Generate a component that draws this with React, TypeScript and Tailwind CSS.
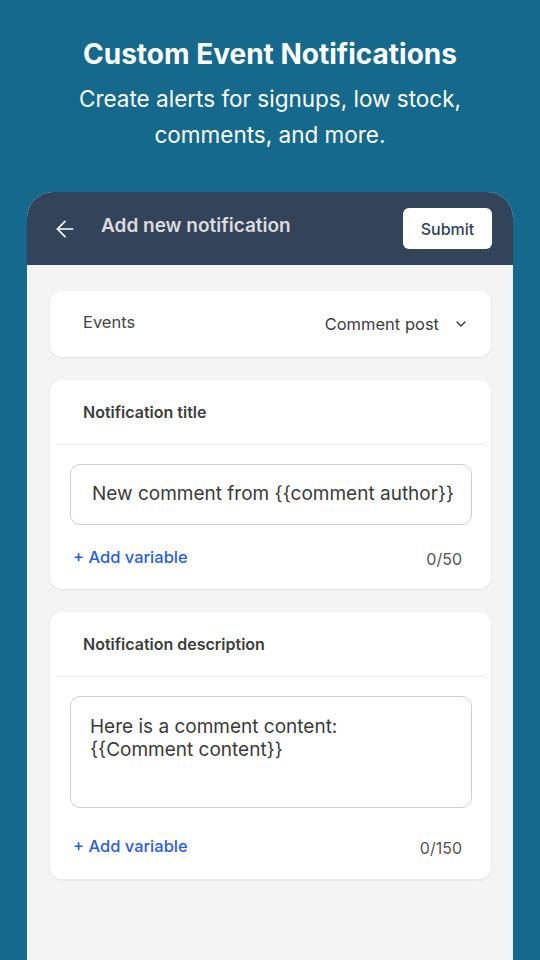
import React from "react";
import { ArrowLeft, ChevronDown } from "lucide-react";

const FieldCard = ({
  label,
  children,
  count,
  footer,
}: {
  label: string;
  children: React.ReactNode;
  count: string;
  footer: string;
}) => (
  <div className="bg-white rounded-xl shadow-[0_1px_3px_rgba(0,0,0,0.08)]">
    <div className="h-[64px] flex items-center px-[33px] text-[16px] font-semibold text-[#3d3d3d]">
      {label}
    </div>
    <div className="mx-[6px] h-px bg-[#ececec]" />
    <div className="pl-[20px] pr-[19px] pt-[19px]">{children}</div>
    <div className={`flex items-center justify-between pl-[23px] pr-[29px] ${footer}`}>
      <span className="text-[16.5px] font-medium text-[#2b5ee8]">+ Add variable</span>
      <span className="text-[16px] text-[#555] mt-1">{count}</span>
    </div>
  </div>
);

const App = () => {
  return (
    <div
      className="h-[960px] w-[540px] overflow-hidden bg-[#15698c] flex flex-col items-center"
      style={{ fontFamily: "Inter, 'Open Sans', sans-serif" }}
    >
      <h1 className="mt-[36px] text-[28px] font-bold text-white leading-[36px]">
        Custom Event Notifications
      </h1>
      <p className="mt-[9px] text-[22.5px] text-white text-center leading-[36px]">
        Create alerts for signups, low stock,
        <br />
        comments, and more.
      </p>

      <div className="mt-[39px] w-[486px] flex-1 rounded-t-[26px] overflow-hidden bg-[#f4f4f4] flex flex-col">
        <div className="h-[73px] bg-[#334359] flex items-center pl-[25px] pr-[21px] shrink-0">
          <ArrowLeft className="w-[26px] h-[26px] text-white" strokeWidth={1.6} />
          <span className="ml-[23px] text-[19px] font-semibold text-[#dcdcdc] -mt-[4px]">
            Add new notification
          </span>
          <button className="ml-auto w-[89px] h-[41px] bg-white rounded-md text-[16px] font-medium text-[#334359]">
            Submit
          </button>
        </div>

        <div className="pl-[23px] pr-[22px] pt-[26px] flex flex-col gap-[23px]">
          <div className="bg-white rounded-xl shadow-[0_1px_3px_rgba(0,0,0,0.08)] h-[66px] flex items-center pl-[33px] pr-[22px]">
            <span className="text-[16.5px] text-[#444] -mt-[4px]">Events</span>
            <span className="ml-auto text-[16.5px] text-[#3d3d3d]">Comment post</span>
            <ChevronDown className="ml-[14px] w-[16px] h-[16px] text-[#333]" strokeWidth={2} />
          </div>

          <FieldCard label="Notification title" count="0/50" footer="pt-[18px] pb-[18px]">
            <div className="h-[61px] rounded-[10px] border border-[#cfcfcf] flex items-center pl-[21px] text-[19px] text-[#3a3a3a] whitespace-nowrap overflow-hidden">
              New comment from {"{{comment author}}"}
            </div>
          </FieldCard>

          <FieldCard label="Notification description" count="0/150" footer="pt-[24px] pb-[19px]">
            <div className="h-[112px] rounded-[10px] border border-[#cfcfcf] pl-[19px] pt-[18px] text-[19px] leading-[23px] text-[#3a3a3a]">
              Here is a comment content:
              <br />
              {"{{Comment content}}"}
            </div>
          </FieldCard>
        </div>
      </div>
    </div>
  );
};

export default App;
